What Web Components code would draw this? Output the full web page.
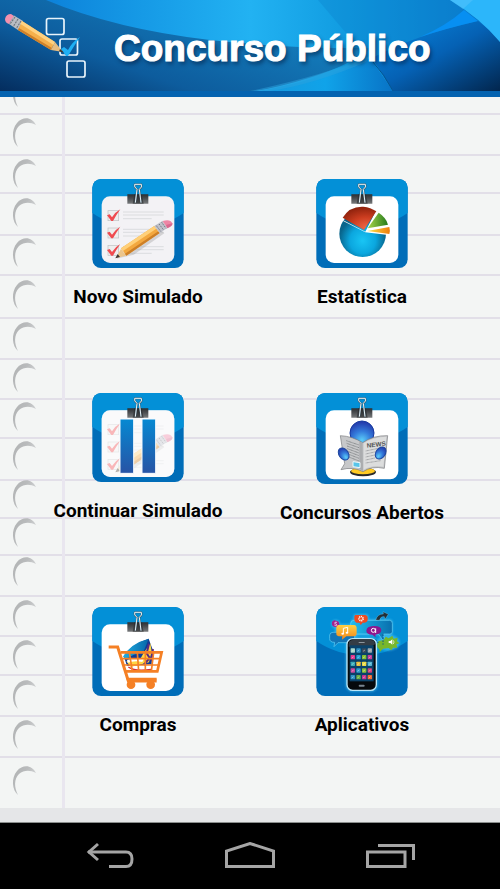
<!DOCTYPE html>
<html lang="pt-BR">
<head>
<meta charset="utf-8">
<meta name="viewport" content="width=device-width, initial-scale=1">
<title>Concurso Público</title>
<style>
    body {
        margin: 0;
        min-height: 100vh;
        display: flex;
        flex-direction: column;
        background: #000;
        font-family: Roboto, "Noto Sans", sans-serif;
    }
    notebook-page {
        flex: 1;
    }
</style>
</head>
<body>
    <app-header>Concurso Público</app-header>
    <notebook-page>
        <menu-tile icon="novo">Novo Simulado</menu-tile>
        <menu-tile icon="estatistica">Estatística</menu-tile>
        <menu-tile icon="continuar">Continuar Simulado</menu-tile>
        <menu-tile icon="concursos">Concursos Abertos</menu-tile>
        <menu-tile icon="compras">Compras</menu-tile>
        <menu-tile icon="aplicativos">Aplicativos</menu-tile>
    </notebook-page>
    <system-bar></system-bar>

<script>
class AppHeader extends HTMLElement {
    constructor() {
        super();
        this.attachShadow({ mode: 'open' });
    }

    connectedCallback() {
        this.shadowRoot.innerHTML = `
            <style>
                :host {
                    display: block;
                }
                header {
                    position: relative;
                    display: flex;
                    align-items: center;
                    gap: 27px;
                    height: 91px;
                    border-bottom: 6px solid #0463b0;
                    overflow: hidden;
                }
                .backdrop {
                    position: absolute;
                    inset: 0;
                    width: 100%;
                    height: 100%;
                }
                .logo {
                    position: relative;
                    flex: none;
                    width: 87px;
                    height: 91px;
                }
                h1 {
                    position: relative;
                    margin: 0;
                    padding-top: 6px;
                    color: #fff;
                    font: bold 37px/44px "Liberation Sans", Arial, sans-serif;
                    -webkit-text-stroke: 1px #fff;
                    text-shadow: 2px 3px 4px rgba(0, 25, 60, .6);
                    white-space: nowrap;
                }
            </style>
            <header>
                <svg class="backdrop" viewBox="0 0 500 91" preserveAspectRatio="none" aria-hidden="true">
                    <defs>
                        <linearGradient id="sky"><stop offset="0" stop-color="#0876d4"/><stop offset=".25" stop-color="#1496e4"/><stop offset=".5" stop-color="#22b2f2"/><stop offset=".7" stop-color="#109be0"/><stop offset="1" stop-color="#0872c8"/></linearGradient>
                        <linearGradient id="deep" x1="0" y1="1" x2="1" y2=".3"><stop offset="0" stop-color="#042d5e"/><stop offset=".35" stop-color="#0d5c9d"/><stop offset="1" stop-color="#1688c6"/></linearGradient>
                        <linearGradient id="right" x1="0" y1="0" x2="1" y2="1"><stop offset="0" stop-color="#078ae3"/><stop offset=".5" stop-color="#0561b4"/><stop offset="1" stop-color="#02264e"/></linearGradient>
                        <linearGradient id="foot"><stop offset="0" stop-color="#1698dd"/><stop offset=".5" stop-color="#10a3e9"/><stop offset="1" stop-color="#0873c6"/></linearGradient>
                    </defs>
                    <path fill="url(#sky)" d="M0 0H500V91H0z"/>
                    <path fill="#0b80cc" opacity=".35" d="M318 0L346 33L372 63L425 40L475 0z"/>
                    <path fill="url(#deep)" d="M0 0H46Q115 29 210 40Q290 49 372 48Q350 65 312 77Q280 87 256 91H0z"/>
                    <path fill="url(#foot)" d="M258 91Q325 79 370 58L393 91z"/>
                    <path fill="#2ca2de" opacity=".5" d="M250 91Q326 75 372 55L366 62Q315 84 270 91z"/>
                    <path fill="url(#right)" d="M372 58Q418 34 478 21Q492 31 500 42V91H393z"/>
                    <path fill="#078ff2" d="M420 37Q446 26 464 10L478 21Q444 29 420 37z"/>
                    <path fill="#2cb6fa" d="M450 0H500V42Q480 18 450 0z"/>
                    <path fill="#57c4fc" opacity=".5" d="M450 0H473L463 9z"/>
                    <path fill="none" stroke="#055692" d="M373 62Q384 74 393 91"/>
                </svg>
                <svg class="logo" viewBox="0 0 87 91" aria-hidden="true">
                    <g fill="none" stroke="#e8f4fb" stroke-width="1.7">
                        <rect x="46.5" y="18.5" width="17.5" height="16" rx="2"/>
                        <rect x="60" y="39" width="17.5" height="16" rx="2"/>
                        <rect x="67" y="61" width="18" height="16" rx="2"/>
                    </g>
                    <path fill="#1fb0f4" d="M61 49L64 47L68 50Q72 42 80 37Q74 46 68 56H66z"/>
                    <path fill="#f391ae" d="M5 19Q6 14 11 14L14 16L9 24Q5 23 5 19z"/>
                    <path fill="#b9bdc3" d="M14 15.500L23 21L18 30L9 24z"/>
                    <path stroke="#73777e" stroke-width="1.200" d="M15 17l-5 7M18 19l-5 8M21 21l-5 8" stroke-dasharray="2 1"/>
                    <path fill="#f5b04c" d="M22 21L55 42L51 50L18 30z"/>
                    <path fill="#ffd281" d="M22 21L55 42L53.500 45L20.500 24z"/>
                    <path fill="#cf812a" d="M19 28L52 48L51 50L18 30z"/>
                    <path fill="#e7bd80" d="M55 42L63 52L51 50z"/>
                    <path fill="#39312b" d="M60 49l4 3.500l-5-1z"/>
                </svg>
                <h1><slot></slot></h1>
            </header>
        `;
    }
}

// The paper is slightly uneven, so rules and holes are listed one by one.
const RULES = [17, 58, 96, 138, 178, 221, 262, 302, 341, 383, 421, 458, 499, 539, 578, 619, 660];
const HOLES = [-18, 22, 63, 102, 142, 184, 226, 267, 306, 345, 384, 422, 461, 504, 544, 584, 624, 670];

class NotebookPage extends HTMLElement {
    constructor() {
        super();
        this.attachShadow({ mode: 'open' });
    }

    connectedCallback() {
        const rules = RULES.map((y) => `<rect y="${y - 1}" width="100%" height="2"/>`).join('');
        const holes = HOLES.map((y) => `<use href="#hole" y="${y}"/>`).join('');

        this.shadowRoot.innerHTML = `
            <style>
                :host {
                    display: block;
                    position: relative;
                    box-sizing: border-box;
                    background: #f3f5f4;
                    border-bottom: 1px solid #8b8e8d;
                    box-shadow: inset 0 -14px #e5e6e8;
                }
                .paper {
                    position: absolute;
                    inset: 0 0 14px;
                    width: 100%;
                    height: calc(100% - 14px);
                }
                main {
                    position: relative;
                    display: grid;
                    grid-template-columns: 1fr 1fr;
                    grid-auto-rows: 134px;
                    row-gap: 80px;
                    padding: 82px 26px 60px;
                }
            </style>
            <svg class="paper" aria-hidden="true">
                <defs>
                    <linearGradient id="shade" x1="0" y1="0" x2="1" y2=".6">
                        <stop offset="0" stop-color="#b0b2b3"/>
                        <stop offset=".5" stop-color="#b9bbbc"/>
                        <stop offset="1" stop-color="#dadcdd"/>
                    </linearGradient>
                    <filter id="soft"><feGaussianBlur stdDeviation=".7"/></filter>
                    <path id="hole" fill="url(#shade)" filter="url(#soft)" d="M18 28C12 23 11 11 17 4C23 -3 32 -2 36 6C30 3 24 3 19 7C14 12 14 20 18 28z"/>
                </defs>
                <g fill="#e2dfe8" filter="url(#soft)">${rules}</g>
                <rect x="62" width="3" height="100%" fill="#e9e6ef" filter="url(#soft)"/>
                ${holes}
            </svg>
            <main><slot></slot></main>
        `;
    }
}

const PAPER = '<rect x="64" y="79" width="218" height="200" rx="25" fill="#fff"/>';

const CLIP = `
    <path fill="url(#metal)" d="M141 73H204V101H141z"/>
    <path fill="#222426" d="M162 73H184L190 101H157z" opacity=".55"/>
    <path fill="none" stroke="#405866" stroke-width="5" d="M165 98L170 58Q160 51 163 43H183Q187 51 177 58L182 98"/>
    <path fill="none" stroke="#e9f3f7" stroke-width="3" d="M165 98L170 58Q160 51 163 43H183Q187 51 177 58L182 98"/>`;

const TICK_ROW = (y) => `
    <g transform="translate(0 ${y})">
        <rect x="83" y="122" width="32" height="30" fill="#eee" stroke="#bfc1c3" stroke-width="2"/>
        <path fill="#ef4b50" d="M80 136L88 133L95 142Q105 126 120 118Q107 136 98 153H93z"/>
        <path stroke="#cfd1d3" stroke-width="2" d="M128 126H250M128 135H250M128 146H214"/>
    </g>`;

const CHECKLIST = `
    <rect x="64" y="79" width="218" height="200" rx="25" fill="#f3f2f5"/>
    ${TICK_ROW(0)}${TICK_ROW(52)}${TICK_ROW(104)}
    <path fill="#999" opacity=".35" d="M108 266L160 254L252 190L246 184z"/>
    <path fill="#ecc58b" d="M107 264L122 236L137 257z"/>
    <path fill="#3d3530" d="M105 265L112 252L119 261z"/>
    <path fill="#f3a83f" d="M122 235L222 168L238 189L138 257z"/>
    <path fill="#ffd079" d="M122 235L222 168L228 176L128 243z"/>
    <path fill="#cd7f27" d="M134 251L234 184L238 189L138 257z"/>
    <path fill="#bfc1ca" d="M222 168L247 152L261 174L238 189z"/>
    <path stroke="#70737e" stroke-width="3" stroke-dasharray="4 3" d="M228 167L242 185M236 162L250 180M244 157L257 175"/>
    <path fill="#ed86a5" d="M247 153Q270 146 276 160Q279 168 261 175z"/>
    <path fill="#c9547f" opacity=".6" d="M257 165L276 160Q278 168 261 175z"/>`;

const CART = `
    <path fill="#123c94" d="M130 174Q153 139 205 122L217 155L214 199L140 204z"/>
    <path fill="url(#sail)" d="M128 176Q151 136 205 122L188 165Q158 166 138 184z"/>
    <path fill="#ffd642" d="M190 165L210 136L214 160L206 193L151 207L138 190L178 186z"/>
    <path fill="none" stroke="#592a83" stroke-width="6" d="M206 137L199 166L208 180L190 201M218 153L213 188"/>
    <path fill="#fff" d="M140 186Q165 176 190 184L186 192Q164 186 142 194z"/>
    <path fill="none" stroke="#d83335" stroke-width="4" d="M144 207Q164 221 213 214"/>
    <g fill="none" stroke="#f58025" stroke-width="8">
        <path d="M85 147H112L144 249H229" stroke-width="9"/>
        <path d="M121 163H244L231 220H135"/>
        <path d="M126 182H239M131 201H235" stroke-width="5"/>
        <path d="M147 163L156 220M171 163L175 220M195 163V220M220 163L213 220" stroke-width="5"/>
        <path d="M139 243H229" stroke-width="8"/>
    </g>
    <circle cx="152" cy="260" r="13" fill="#f58025"/>
    <circle cx="211" cy="260" r="13" fill="#f58025"/>`;

const READER = `
    <ellipse cx="176" cy="264" rx="39" ry="13" fill="#29292b"/>
    <ellipse cx="176" cy="261" rx="36" ry="10" fill="#ffca24"/>
    <circle cx="173" cy="147" r="36" fill="url(#head)" stroke="#173a9f" stroke-width="3"/>
    <path fill="#c7c8ca" stroke="#77797b" stroke-width="2" d="M108 155Q145 157 175 176Q206 154 250 155L240 253Q202 245 176 263Q146 247 110 257L121 239z"/>
    <path fill="#dcdddd" d="M178 178Q209 158 246 158L237 248Q204 242 178 257z"/>
    <path fill="#aaacae" d="M165 172L175 177L176 261L165 255z"/>
    <path stroke="#85888a" stroke-width="3" stroke-dasharray="3 1" d="M126 170L164 183M127 178L164 191M128 186L164 199M129 194L164 207M130 202L164 215M131 210L164 223M131 218L164 231"/>
    <path stroke="#a1a3a5" stroke-width="3" stroke-dasharray="3 1" d="M184 201L237 190M184 210L215 203M184 219L212 213M184 228L212 222M184 237L229 230"/>
    <text x="188" y="191" transform="rotate(-6 188 191)" font-family="Liberation Sans, sans-serif" font-size="19" fill="#515355">NEWS</text>
    <path fill="#57c4e9" stroke="#edf9fc" stroke-width="3" d="M146 233L167 236V251L146 248z"/>
    <ellipse cx="118" cy="210" rx="14" ry="20" fill="url(#head)" stroke="#1b469f" stroke-width="3" transform="rotate(-35 118 210)"/>
    <ellipse cx="229" cy="207" rx="14" ry="20" fill="url(#head)" stroke="#1b469f" stroke-width="3" transform="rotate(35 229 207)"/>`;

const PIE = `
    <circle cx="175" cy="191" r="70" fill="url(#ball)"/>
    <path fill="#fff" d="M105 145L183 185L217 118L265 118L270 197L183 187L112 151z"/>
    <path fill="url(#ember)" d="M115 143Q136 108 177 110Q199 112 216 124L179 180z"/>
    <path fill="url(#leaf)" d="M190 175L223 128Q246 143 251 164z"/>
    <path fill="url(#gold)" d="M189 183L255 171Q258 182 255 192z"/>`;

const APP_COLORS = ['#a6d6ca', '#2c91c4', '#37485a', '#9aa8ad', '#e3358c', '#269fd5', '#82bf30', '#c83d99', '#3baab6', '#e8bd3c', '#eedb45', '#57b8d3', '#c7479b', '#2e9bce', '#8cbf3a', '#d3417a', '#2c91c4', '#67ae45', '#c8328e', '#f46b2f'];

const PHONE = `
    <g fill="#5ad0f8" opacity=".55" filter="url(#glow)">
        <rect x="139" y="64" width="126" height="48" rx="10"/>
        <rect x="92" y="78" width="68" height="40" rx="10"/>
        <rect x="147" y="48" width="46" height="30" rx="8"/>
        <circle cx="94" cy="78" r="13"/>
        <ellipse cx="252" cy="134" rx="34" ry="24"/>
        <rect x="124" y="118" width="96" height="163" rx="20"/>
    </g>
    <g stroke="#64d2f7" stroke-width="2">
        <path fill="url(#bubble)" d="M149 67H256Q264 67 264 76V101Q264 108 256 108H238L239 131L222 108H145Q138 107 139 98V77Q139 67 149 67z"/>
        <path fill="#1275b7" d="M86 103H151V134H101L89 146L91 133Q75 133 76 121V111Q77 103 86 103z"/>
    </g>
    <path fill="#222f38" stroke="#8ed3ed" stroke-width="1" d="M214 66Q220 47 237 48L236 41L252 49L242 64L240 56Q230 53 225 67z"/>
    <path fill="#a3218e" d="M83 72Q87 64 96 68Q106 70 105 80Q104 91 93 87Q80 86 83 72z"/>
    <path fill="none" stroke="#fff" stroke-width="2" d="M98 73Q90 71 91 76Q99 79 97 82Q94 84 90 81"/>
    <path fill="url(#amber)" d="M102 81H150Q157 82 157 89V108Q156 115 148 115H126L113 125L114 115H103Q95 113 96 106V89Q95 83 102 81z"/>
    <path fill="none" stroke="#fff" stroke-width="3" d="M117 107V91L130 88V104"/>
    <ellipse cx="115" cy="107" rx="4" ry="3" fill="#fff"/><ellipse cx="128" cy="104" rx="4" ry="3" fill="#fff"/>
    <path fill="#ef4b21" d="M153 51H183Q191 53 190 61V67Q188 74 181 74H175L169 82L166 74H156Q149 71 150 63V58Q149 53 153 51z"/>
    <circle cx="170" cy="62" r="6" fill="none" stroke="#fff" stroke-width="5" stroke-dasharray="3 2"/>
    <path fill="#8d168f" d="M186 98Q187 85 207 84Q230 83 231 96Q231 108 213 110L214 118L204 110Q186 109 186 98z"/>
    <circle cx="207" cy="97" r="6" fill="none" stroke="#fff" stroke-width="3"/><path stroke="#fff" stroke-width="3" d="M214 91V105"/>
    <path fill="#78b72b" d="M222 130L238 126L244 116L253 121L264 113L268 122L280 119L278 130L286 136L276 139L279 149L266 149L261 157L253 150L236 152L226 163L225 153Q217 150 219 139z"/>
    <path fill="#fff" d="M253 129H258L264 124V140L258 135H253z"/><path fill="none" stroke="#fff" stroke-width="2" d="M267 127Q271 132 267 138"/>
    <path fill="none" stroke="#065489" stroke-width="3" stroke-dasharray="5 4" d="M236 109V140M214 124L222 135"/>
    <rect x="128" y="122" width="88" height="155" rx="17" fill="#06090c" stroke="#b9e7fa" stroke-width="4"/>
    <path fill="#343d46" d="M133 139Q133 126 146 126H199Q212 126 212 139L199 146H133z"/>
    <rect x="136" y="142" width="72" height="108" fill="#0a426a"/>
    ${APP_COLORS.map((c, i) => `<rect x="${139 + i % 4 * 17}" y="${151 + Math.floor(i / 4) * 20}" width="13" height="13" rx="2" fill="${c}"/><path stroke="#fff" stroke-width="2" opacity=".65" d="M${142 + i % 4 * 17} ${160 + Math.floor(i / 4) * 20}l6-4"/>`).join('')}
    <rect x="163" y="132" width="18" height="3" rx="1" fill="#8c969e"/>
    <rect x="163" y="260" width="18" height="6" rx="3" fill="#78848e"/>`;

const ICONS = {
    novo: CHECKLIST + CLIP,
    estatistica: PAPER + PIE + CLIP,
    continuar: `${PAPER}<g opacity=".4">${CHECKLIST}</g>
        <path fill="url(#pause)" stroke="#f5faff" stroke-width="3" d="M119 105H160V268H119zM185 105H226V268H185z"/>${CLIP}`,
    concursos: '<rect x="64" y="79" width="218" height="207" rx="25" fill="#fff"/>' + READER + CLIP,
    compras: PAPER + CART + CLIP,
    aplicativos: PHONE
};

class MenuTile extends HTMLElement {
    constructor() {
        super();
        this.attachShadow({ mode: 'open' });
    }

    connectedCallback() {
        const icon = this.getAttribute('icon');
        // the news icon is a little taller than the others
        const height = icon === 'concursos' ? 91 : 89;

        this.shadowRoot.innerHTML = `
            <style>
                :host {
                    display: block;
                    text-align: center;
                }
                button {
                    display: inline-flex;
                    flex-direction: column;
                    align-items: center;
                    gap: 17px;
                    padding: 0;
                    border: 0;
                    background: none;
                    color: #000;
                    font: 700 19px/24px Roboto, "Noto Sans", sans-serif;
                    white-space: nowrap;
                    cursor: pointer;
                }
                svg {
                    display: block;
                }
            </style>
            <button type="button">
                <svg width="92" height="${height}" viewBox="35 27 276 ${height * 3}" aria-hidden="true">
                    <defs>
                        <linearGradient id="metal" x1="0" y1="0" x2="0" y2="1"><stop offset="0" stop-color="#2c2e31"/><stop offset=".45" stop-color="#4b4e51"/><stop offset="1" stop-color="#77797b"/></linearGradient>
                        <linearGradient id="pause" x1="0" y1="0" x2="0" y2="1"><stop offset="0" stop-color="#0689d2"/><stop offset="1" stop-color="#2753a5"/></linearGradient>
                        <radialGradient id="ball" cx=".5" cy=".65"><stop offset="0" stop-color="#19c5f4"/><stop offset=".55" stop-color="#0ba7df"/><stop offset="1" stop-color="#08658c"/></radialGradient>
                        <radialGradient id="ember" cx=".7" cy=".9" r=".9"><stop offset="0" stop-color="#ed6847"/><stop offset=".5" stop-color="#cc3d20"/><stop offset="1" stop-color="#8d210c"/></radialGradient>
                        <linearGradient id="leaf"><stop offset="0" stop-color="#a8d64b"/><stop offset="1" stop-color="#247a1b"/></linearGradient>
                        <linearGradient id="gold"><stop offset="0" stop-color="#ffe448"/><stop offset="1" stop-color="#ef7d0b"/></linearGradient>
                        <radialGradient id="head" cx=".5" cy=".8" r=".75"><stop offset="0" stop-color="#5ccef8"/><stop offset=".5" stop-color="#347bdb"/><stop offset="1" stop-color="#243cad"/></radialGradient>
                        <linearGradient id="sail"><stop offset="0" stop-color="#20aee0"/><stop offset="1" stop-color="#0866a9"/></linearGradient>
                        <linearGradient id="bubble"><stop offset="0" stop-color="#21bdef"/><stop offset="1" stop-color="#096ead"/></linearGradient>
                        <linearGradient id="amber" x1="0" y1="0" x2="0" y2="1"><stop offset="0" stop-color="#ffd044"/><stop offset="1" stop-color="#f28617"/></linearGradient>
                        <filter id="glow"><feGaussianBlur stdDeviation="3"/></filter>
                        <clipPath id="plate"><rect x="36" y="27" width="274" height="${height * 3}" rx="26"/></clipPath>
                    </defs>
                    <g clip-path="url(#plate)">
                        <path fill="#006db8" d="M35 27H311V303H35z"/>
                        <path fill="#0390d7" d="M35 27H311V128Q250 171 173 171Q96 171 35 128z"/>
                        ${ICONS[icon]}
                    </g>
                </svg>
                <span><slot></slot></span>
            </button>
        `;
    }
}

class SystemBar extends HTMLElement {
    constructor() {
        super();
        this.attachShadow({ mode: 'open' });
    }

    connectedCallback() {
        this.shadowRoot.innerHTML = `
            <style>
                :host {
                    display: block;
                    background: #000;
                }
                nav {
                    display: grid;
                    grid-template-columns: repeat(3, 140px);
                    justify-content: center;
                    height: 66px;
                }
                button {
                    display: grid;
                    place-items: center;
                    padding: 0;
                    border: 0;
                    background: none;
                    cursor: pointer;
                }
                svg {
                    fill: none;
                    stroke: #a5a5a5;
                    stroke-width: 3;
                }
            </style>
            <nav>
                <button type="button" aria-label="Voltar">
                    <svg width="52" height="28" viewBox="0 0 52 28"><path d="M4 10H42Q48 10 48 17Q48 24.500 42 24.500H25"/><path d="M14 2L5 10L14 18"/></svg>
                </button>
                <button type="button" aria-label="Início">
                    <svg width="52" height="28" viewBox="0 0 52 28"><path d="M2.500 24.500V9L26 1.500L49.500 9V24.500z"/></svg>
                </button>
                <button type="button" aria-label="Recentes">
                    <svg width="52" height="28" viewBox="0 0 52 28"><path d="M3.500 10H41V24.500H3.500zM14 3.500H49.500V18"/></svg>
                </button>
            </nav>
        `;
    }
}

customElements.define('app-header', AppHeader);
customElements.define('notebook-page', NotebookPage);
customElements.define('menu-tile', MenuTile);
customElements.define('system-bar', SystemBar);
</script>
</body>
</html>
